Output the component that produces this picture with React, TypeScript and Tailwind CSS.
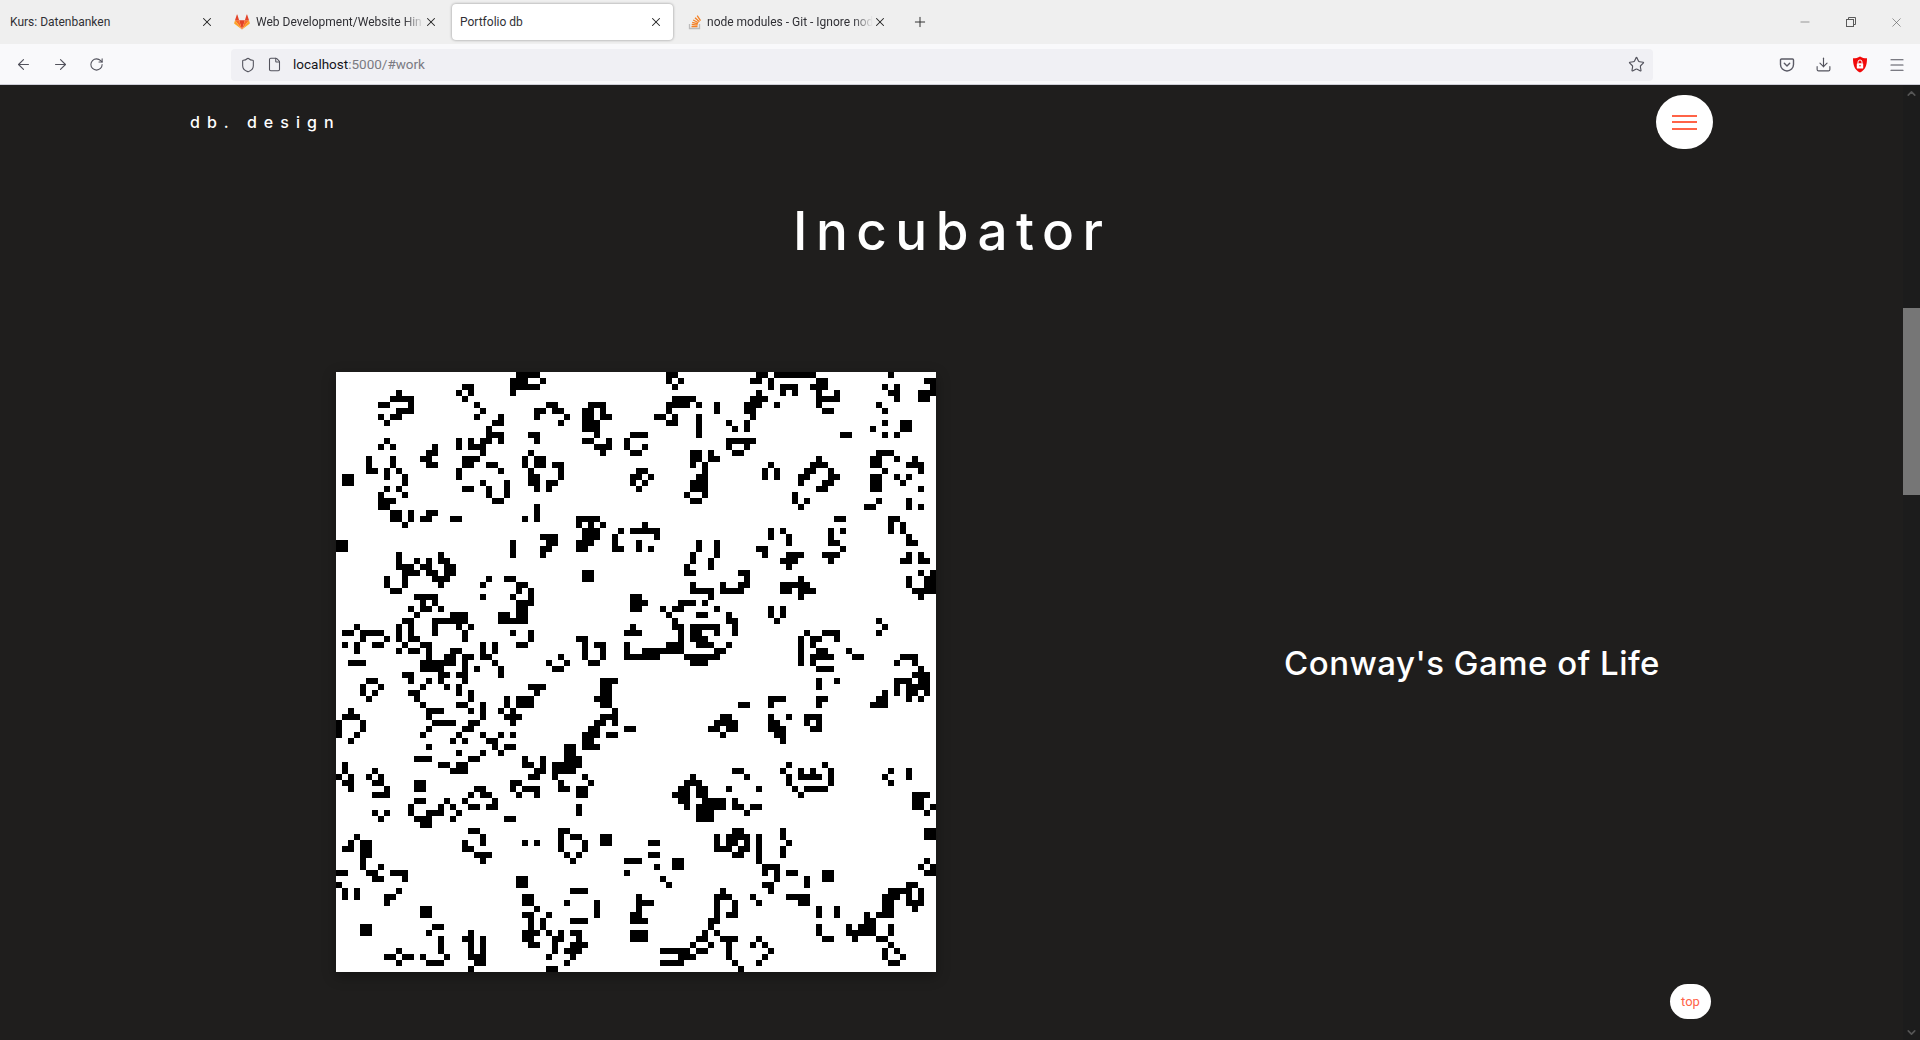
import { ArrowLeft, ArrowRight, RotateCw, Shield, File, Star, Download, Menu, Minus, X, Plus, ChevronUp, ChevronDown } from 'lucide-react';

// cell runs per quadrant of the 100x100 board: "row cols,cols;..."
const Q1 = '0 30-33;1 29-31,34;2 21-22,29-33;3 10,20,22,29;4 9-12,21;5 7-8,12,23,35-36,42-44;6 10-12,24,33-34,36-37,41-42,44;7 7,9-10,23,27,33,38,41-42,44-45;8 8,26-27,37,41-42,43;9 25,41-43;10 25-27,32-33,43,49;11 8,20,22,24-25,27,33,41-42,45,48;12 7,9,16,20,22-24,43-45,48;13 15-16,24,32,44,49;14 5,9,14-15,21-23,31,33-34;15 5,9,15-16,21-22,25-26,31,33-34,36-37;16 5-6,8,10,20,27,32,37;17 1-2,8,11,20,32-33,37,49;18 1-2,11,24,28,32-33,35-36,49;19 8,10,21-22,25,28,33,35;20 7,11,25,28;21 7-9,26-27;22 7-8,33;23 9-10,12,15-16,33;24 9-10,12,14-15,19-20,31,33,40-43;25 11,40,42,44;26 41-43,47,49;27 34-36,41-43,46;28 0-1,29,35-36,40-42,46;29 0-1,29,34-35,40-41,46-47;30 10,17,29,34;31 10,13,15,17-18;32 10-12,14-15,18-19;33 11-13,15-16,18-19,41-42;34 8,11,16-18,25,28-29,41-42;35 8,11,17,24,30-31;36 9-10,30,32;37 13-16,24,29,32,49;38 14,16,30-32,49;39 12,14-15,17,30-31,49;40 13,19-21,27-28,30-31;41 11-12,16-21,27-31;42 3,10,12,16,20,22,49;43 1-2,4-7,10,12,16,21,29,32,48-49;44 4,8,10,12-13,21,32,40-41;45 1,3,6-7,11,14-15,24,26,30-31,41,43-44,48;46 3,10,12-13,15,19-20,24,26,41,44,48;47 15,18-19,21-22,24-25,37,41,44,48-49;48 2-4,14-19,21,26,35,38,42-43;49 14-17,21,23,27,36-37';
const Q2 = '0 5-6,20-21,23-29,42;1 5,7,19-20,22,30-31,48-49;2 6,22,24-26,29-31,41,43,49;3 20,24,26,30,33,42-43,47-49;4 6-9,19-21,30-33,43,47-48;5 5-8,10,13,18-20,23,30,40;6 5,13,18-19,31-32,41;7 3-4,6,10,19;8 5-6,10,15,18,41,44-45;9 10,16,18,39,44-45;10 0-1,10,34-35,41,43;11 15-19;12 1,15,18;13 0,9-10,12,16-17,40-42;14 9-10,12-13,30,39-40,43,46;15 9,11,22,29-31,39-40,45-47;16 0-1,11,21,23,28-29,32,41,47;17 0,2,10-11,21,23,27-28,32-33,39-40,43,45;18 1,9-11,27,31-32,39-40,44;19 0,9-11,30-31,39-40,47;20 8,11,26;21 9-10,26,28,40,45;22 27,38-39,45,47;24 33-34,42-43;25 1,42,44;26 0-3,22,24,32,34,42,44;27 3,22,25,32,45;28 0,10,13,25,32-33,45-46;29 0,2,10,13,20-21,34;30 9,13,21,25-27,31-33,45,47;31 9,12,24-26,32,44-45,47-48;32 8,12,25;33 8-9,17-18,47,49;34 18,27,45,48-49;35 9,14,17-18,24-28,45,48-49;36 9-12,14-17,24-25,27-29,46-49;37 0,12,27,47;38 0-1,7-9,11;39 0,4,6-7,13,22,24;40 5,10-11,15,22,24;41 6,15-16,23,40;42 6-7,9-13,16,41;43 0,7,9-10,13,16,28,31-33,40;44 7,9-11,27,29-30,33;45 5-7,10-12,15,27,29;46 1-7,13-14,27,30-31,35;47 0-3,8-13,27,29-32,36-37,44-46;48 9-11,27,29,43,46;49 30-32,47';
const Q3 = '0 11-12,17-18,20-21,27;1 5-6,12,15,17,21,44-46;2 4,7,14,18,20,32-34,44-45;3 4,6,12-13,20,22,33,44-45;4 5,13,22,28,30-32,43-45;5 14,20-21,24,28,30-32,44-45;6 2,15-17,22,24,27,29,46;7 1-3,15,24,28-30,44-46;8 0,4,16-19,22-23,29,43-44,46;9 0,4,15,21-22,42-43,48-49;10 0,3,14,20,24,27,29,41-43,45-46;11 2,19,21,25-26,41-42;12 15,26,28-29,38-39,41-43;13 20,24,27,38-39;14 13-15,22-23,31,34,38-40;15 1,17-18,20-21,31-32,34,36-40;16 1,6,19-21,33-34,36-39;17 0,2,5,7,32-33,36,41;18 1-2,6-7,13-14,29-30,37,42;19 2,8,13-14,23-24,29,31-33,37-38,40-41;20 6-8,22,24-25,30,33,40-41;21 13-14,18,21,26;22 12,17,19,22-23,25-26,40;23 6,8,12,15-17,20,40;24 7,13-15,19,28-29;25 14-15;26 22-23,37-38;27 3,24,37,39-40,44-45;28 2,4-5,21,24,31,33,37,41,44-45;29 1-2,4-5,21-22,37,41;30 4-5,23-25,38,40;31 4,24,39,48-49;32 4,7;33 0-1,5-6,9-11,48;34 6-7,11,30-31;35 0,30-31;36 1,3,10,39-41;37 1,3,8-9,31-32;38 8,31-32,38,43;39 14-15,33,43;40 14-15,31-32,35,43,49;41 32,34,39-41,49;42 4-5,16-17,32,34;43 4-5,15,22,31-33,35,37,39-40,49;44 17,21-22,24,31-32,36-37,40,49;45 17,22,24,32-33,36,39-41;46 10,17,22,24,36,38-40;47 8-9,11-12,14,18,22-24,35,39;48 10,15-17,23-24,38;49 22,35-36';
const Q4 = '0 46-48;1 30,33,43-45,47-48;2 30,43,45-48;3 41,43,45-46,48;4 22-24,30-31,40-41,45,47;5 17-18,22,30,39-41;7 14-15,22,25,28-30;8 13-16,22-23,28,30;9 12-13,15-16,22-24,29-30;10 14,23-24;11 24;15 25,31;16 16-17,24,27,29,32,42,45;17 9,18,25,27-30,32,41,45;18 8-10,25,32,42;19 7-8,10-11,15,20,26,28-31;20 6-8,10-11,27,46-48;21 7-8,11-14,16,46-47;22 8,10-14,16-17,19-20,46-47,49;23 10-12,18,48;24 10-12;26 16-17,24,48-49;27 13,15-18,20,24,48-49;28 2-3,13,15-16,18,20,25;29 13-15,17-18,20,24;30 2-3,16-17,20,24;31 0,6-7,20,48;32 3,6-7,21-23,47,49;33 21,23,25-26,31-32,48-49;34 4,23,28,31-32;35 5,21-22,28,45-46;36 14,22,42-45,47;37 0,13-15,19,25-28,41-43,45,47;38 0-2,13,16,20,27-28,41-42,45-47;39 0,13,16,30,33,41-42,46;40 0,13,15-16,30,33,38,40-42;41 0-1,12-13,38-39;42 12,30,35,37-39,42;43 0-1,11,13,30,35-39,42;44 0-1,10-11,14-16,20,31-32,36,40-41;45 9,12,15,19,21,42;46 4-8,10-11,15,22,41,43;47 7-9,15,21,41,44;48 4-7,16,20,42-43;49 17';

function parseCells(data: string, colOffset: number, rowOffset: number) {
  const out: { x: number; y: number; w: number }[] = [];
  data.split(';').forEach((line) => {
    const [row, cols] = line.split(' ');
    cols.split(',').forEach((c) => {
      const [a, b] = c.split('-').map(Number);
      out.push({ x: a + colOffset, y: Number(row) + rowOffset, w: (b ?? a) - a + 1 });
    });
  });
  return out;
}

const cells = [...parseCells(Q1, 0, 0), ...parseCells(Q2, 50, 0), ...parseCells(Q3, 0, 50), ...parseCells(Q4, 50, 50)];

const GitlabIcon = () => (
  <svg width="16" height="16" viewBox="0 0 16 16" className="shrink-0">
    <path d="M8 15.5 10.9 6.2H5.1Z" fill="#e24329" />
    <path d="M8 15.5 5.1 6.2H1Z" fill="#fc6d26" />
    <path d="M1 6.2.2 9c-.1.3 0 .5.2.7L8 15.5Z" fill="#fca326" />
    <path d="M1 6.2h4.1L3.4.8c-.1-.3-.5-.3-.6 0Z" fill="#e24329" />
    <path d="M8 15.5 10.9 6.2H15Z" fill="#fc6d26" />
    <path d="M15 6.2l.8 2.8c.1.3 0 .5-.2.7L8 15.5Z" fill="#fca326" />
    <path d="M15 6.2h-4.1L12.6.8c.1-.3.5-.3.6 0Z" fill="#e24329" />
  </svg>
);

const StackIcon = () => (
  <svg width="16" height="16" viewBox="0 0 16 16" fill="none" className="shrink-0">
    <path d="M2.5 10v4.5h10V10" stroke="#bcbbbb" strokeWidth="1.3" />
    <path d="M4.5 12.7h6M4.7 10.5l5.9.6M5.2 8.3l5.7 1.6M6.2 6l5.2 2.8M8 3.8l4.4 3.9M10.2 1.7l3.3 4.9" stroke="#f48024" strokeWidth="1.3" />
  </svg>
);

const PocketIcon = () => (
  <svg width="16" height="16" viewBox="0 0 16 16" fill="none" stroke="#5b5b66" strokeWidth="1.4" strokeLinejoin="round" strokeLinecap="round">
    <path d="M2.5 2h11c.6 0 1 .4 1 1v4.5a6.5 6.5 0 0 1-13 0V3c0-.6.4-1 1-1Z" />
    <path d="M5.3 6.3 8 8.9l2.7-2.6" />
  </svg>
);

const RestoreIcon = () => (
  <svg width="10" height="10" viewBox="0 0 10 10" fill="none" stroke="#5a5a5a" strokeWidth="1">
    <rect x=".5" y="2.5" width="7" height="7" />
    <path d="M2.5 2.5v-2h7v7h-2" />
  </svg>
);

const LockShield = () => (
  <svg width="16" height="17" viewBox="0 0 16 17">
    <path d="M8 .5c2 1.3 4.200 1.800 7 1.800 0 6.700-1.500 11.700-7 14.200C2.500 14 1 9 1 2.300 3.800 2.300 6 1.800 8 .5Z" fill="#f10a0a" />
    <rect x="4.800" y="7.300" width="6.400" height="5.200" rx=".6" fill="#fff" />
    <path d="M6 7.300V6a2 2 0 0 1 4 0v1.300" fill="none" stroke="#fff" strokeWidth="1" />
    <circle cx="8" cy="9.700" r=".8" fill="#f10a0a" />
  </svg>
);

const Tab = ({ title, icon, w, active, textW, gap = 'mr-[6px]' }: { title: string; icon?: React.ReactNode; w: string; active?: boolean; textW: string; gap?: string }) => (
  <div className={`flex h-9 items-center ${w} ${active ? 'rounded bg-white pl-2 pr-[10px] shadow-[0_0_3px_rgba(0,0,0,0.4)]' : 'pl-[10px] pr-[10px]'}`}>
    {icon && <span className={`${gap} flex`}>{icon}</span>}
    <span className={`${textW} overflow-hidden whitespace-nowrap text-[12px] text-[#303035]`}>{title}</span>
    <X size={14} strokeWidth={1.8} className="ml-auto shrink-0 text-[#222]" />
  </div>
);

export default function App() {
  return (
    <div className="flex h-[1040px] w-[1920px] flex-col overflow-hidden bg-[#1f1e1d] font-['Roboto',sans-serif]">
      {/* tab strip */}
      <div className="flex h-11 shrink-0 items-center bg-[#efefef]">
        <div className="flex w-[1760px] items-center">
          <Tab title="Kurs: Datenbanken" w="w-[224px]" textW="w-[180px]" />
          <Tab title="Web Development/Website Hin" icon={<GitlabIcon />} w="w-[224px]" textW="w-[171px] [mask-image:linear-gradient(to_right,black_88%,transparent)]" />
          <div className="w-1" />
          <Tab title="Portfolio db" w="w-[221px]" active textW="w-[180px]" />
          <div className="w-1" />
          <Tab title="node modules - Git - Ignore node" icon={<StackIcon />} w="w-[220px]" gap="mr-[4px]" textW="w-[169px] [mask-image:linear-gradient(to_right,black_88%,transparent)]" />
          <Plus size={16} strokeWidth={1.5} className="ml-[15px] text-[#333]" />
        </div>
        <div className="flex flex-1 items-center justify-end pr-[16px] text-[#5a5a5a]">
          <Minus size={14} strokeWidth={1} className="mr-[34px]" />
          <span className="mr-[33px] flex"><RestoreIcon /></span>
          <X size={15} strokeWidth={1} />
        </div>
      </div>
      {/* toolbar */}
      <div className="flex h-[41px] shrink-0 items-center border-b border-[#cfcfd8] bg-[#f9f9fb] pt-[1px] text-[#52525c]">
        <div className="flex w-[231px] items-center gap-[20px] pl-[15px]">
          <ArrowLeft size={17} strokeWidth={1.6} />
          <ArrowRight size={17} strokeWidth={1.6} />
          <RotateCw size={15} strokeWidth={1.7} />
        </div>
        <div className="flex h-8 w-[1422px] items-center rounded bg-[#f0f0f4] pl-[9px] pr-[8px]">
          <Shield size={16} strokeWidth={1.6} />
          <File size={15} strokeWidth={1.7} className="ml-[11px]" />
          <span className="ml-[11px] text-[13.5px] text-[#15141a]">localhost<span className="text-[#7a7a82]">:5000/#work</span></span>
          <Star size={17} strokeWidth={1.6} className="ml-auto" />
        </div>
        <div className="ml-[126px] flex items-center gap-[20px]">
          <PocketIcon />
          <Download size={17} strokeWidth={1.6} />
          <LockShield />
          <Menu size={18} strokeWidth={1.6} />
        </div>
      </div>
      {/* page */}
      <div className="relative flex flex-1 overflow-hidden">
        <div className="flex min-w-0 flex-1 flex-col">
          <div className="flex items-center justify-between pl-[190px] pr-[190px] pt-[10px]">
            <span className="font-['Inter',sans-serif] text-[16px] font-medium tracking-[0.44em] text-white">db. design</span>
            <button className="flex h-[54px] w-[57px] flex-col items-center justify-center gap-[4.500px] rounded-full bg-white">
              <span className="h-[2px] w-[25px] bg-[#ff6347]" />
              <span className="h-[2px] w-[25px] bg-[#ff6347]" />
              <span className="h-[2px] w-[25px] bg-[#ff6347]" />
            </button>
          </div>
          <h1 className="mt-[51px] pl-[793px] font-['Inter',sans-serif] text-[53px] font-medium leading-[62px] tracking-[0.16em] text-white">Incubator</h1>
          <div className="mt-[110px] flex items-center pl-[336px]">
            <svg viewBox="0 0 100 100" shapeRendering="crispEdges" className="h-[600px] w-[600px] shrink-0 bg-white shadow-[0_4px_12px_rgba(0,0,0,0.35)]">
              {cells.map((c, i) => (
                <rect key={i} x={c.x} y={c.y} width={c.w} height={1} fill="#000" />
              ))}
            </svg>
            <h2 className="ml-[348px] -mt-[16px] font-['Inter',sans-serif] text-[33px] font-medium tracking-[0.5px] text-white">Conway's Game of Life</h2>
          </div>
        </div>
        {/* scrollbar */}
        <div className="relative flex w-[17px] shrink-0 flex-col items-center justify-between bg-[#1c1c1c] pb-[1px] pt-[2px] text-[#555]">
          <ChevronUp size={13} strokeWidth={3} />
          <div className="absolute left-0 top-[223px] h-[187px] w-[17px] bg-[#767676]" />
          <ChevronDown size={13} strokeWidth={3} />
        </div>
        <button className="absolute left-[1670px] top-[899px] flex h-[35px] w-[41px] items-center justify-center rounded-full bg-white text-[13px] text-[#ff6347]">top</button>
      </div>
    </div>
  );
}
